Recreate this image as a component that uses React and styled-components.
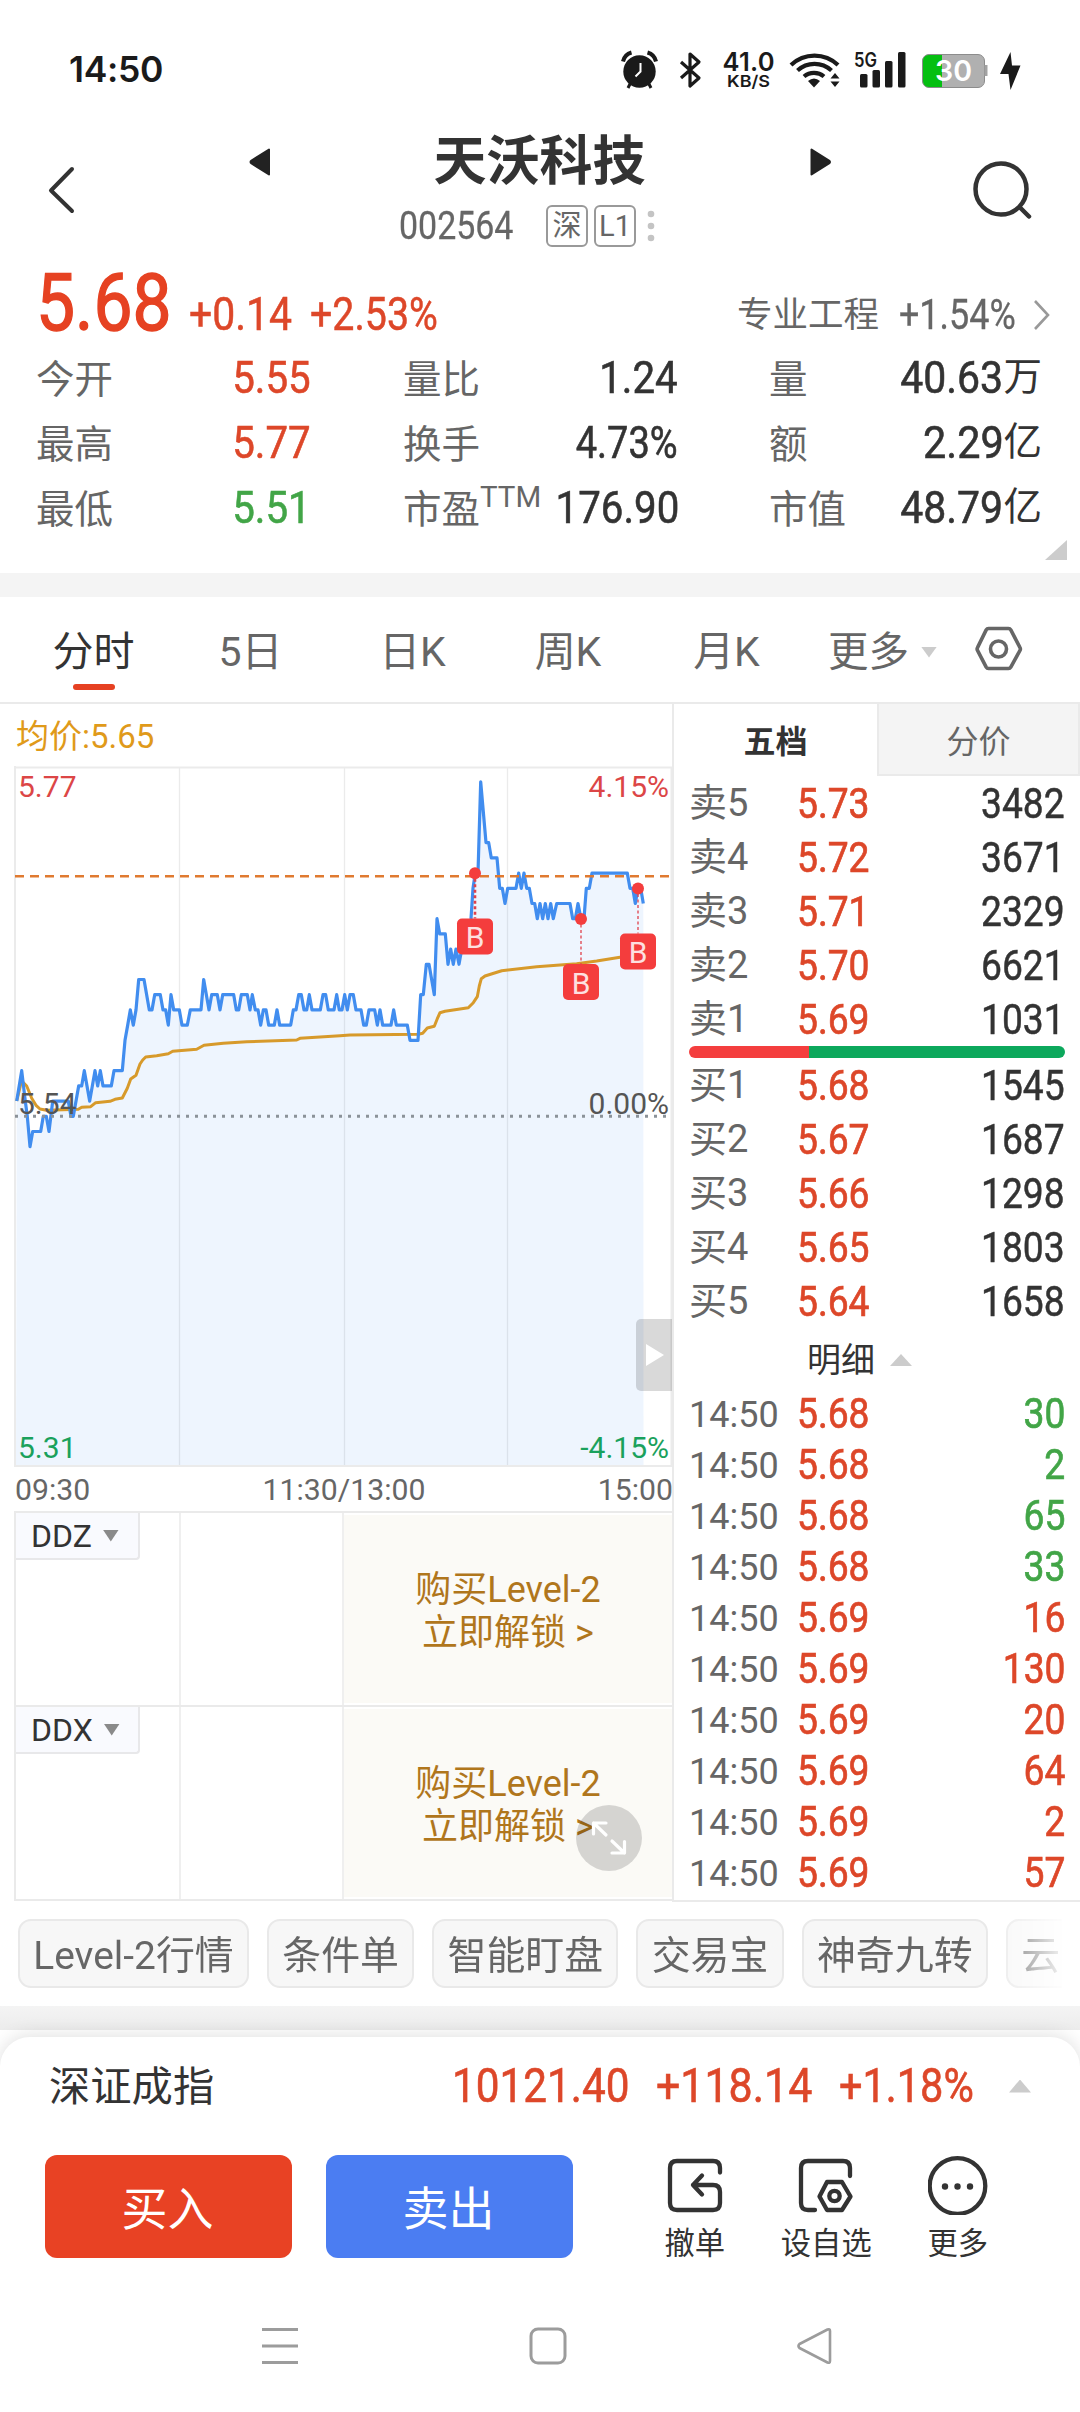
import React from "react";
import styled, { createGlobalStyle } from "styled-components";

const RED = "#dd4729";
const GREEN = "#42a547";
const INK = "#333333";
const GREY = "#666666";
const LINE = "#eaeaea";

const GlobalStyle = createGlobalStyle`
  * { box-sizing: border-box; }
  html, body { margin: 0; background: #fff; }
  body {
    font-family: Roboto, "Noto Sans CJK SC", sans-serif;
    color: ${INK};
    -webkit-font-smoothing: antialiased;
  }
  svg { display: block; flex: none; }
`;

const Page = styled.div`
  width: 1080px;
  height: 2412px;
  overflow: hidden;
  display: flex;
  flex-direction: column;
  background: #fff;
`;

/* Condensed figures used for every price and amount */
const Num = styled.span`
  display: inline-block;
  white-space: nowrap;
  font-size: ${(p) => p.$size || 44}px;
  line-height: 1;
  font-weight: 400;
  -webkit-text-stroke: ${(p) => p.$stroke || 0}px currentColor;
  color: ${(p) => p.$color || INK};
  transform: scaleX(${(p) => p.$squeeze || 0.88});
  transform-origin: ${(p) => (p.$right ? "right" : "left")} center;
`;

/* ---------- status bar ---------- */
const StatusBar = styled.div`
  height: 110px;
  padding: 31px 40px 0 69px;
  display: flex;
  align-items: flex-start;
  justify-content: space-between;
`;
const Clock = styled.div`
  font: 600 35.500px/78px Inter, sans-serif;
  letter-spacing: -0.3px;
  color: #1a1a1a;
`;
const StatusGlyphs = styled.svg`
  margin-top: 9px;
  font-family: Inter, sans-serif;
  font-weight: 600;
  fill: #1a1a1a;
`;

function StatusIcons() {
  return (
    <StatusGlyphs width="430" height="60" viewBox="0 0 430 60">
      <g>
        <circle cx="29.5" cy="31.5" r="16.2" />
        <path d="M13 21.5a12 12 0 0 1 8.5-9" stroke="#1a1a1a" strokeWidth="4" fill="none" />
        <path d="M46 21.5a12 12 0 0 0-8.5-9" stroke="#1a1a1a" strokeWidth="4" fill="none" />
        <path d="M20.5 43l-2.500 5M38.500 43l2.500 5" stroke="#1a1a1a" strokeWidth="3" />
        <path d="M30.500 23v8.500l-5 5" stroke="#fff" strokeWidth="2" fill="none" />
      </g>
      <path d="M71 22l18 16-9 8V14l9 8-18 16" fill="none" stroke="#1a1a1a" strokeWidth="3.200" strokeLinejoin="round" />
      <text x="112.500" y="30.500" fontSize="25.500" textLength="52">41.0</text>
      <text x="117" y="47" fontSize="16.500" textLength="43" lengthAdjust="spacingAndGlyphs">KB/S</text>
      <text x="244" y="26.500" fontSize="19.500" textLength="23" lengthAdjust="spacingAndGlyphs">5G</text>
      <g fill="none" stroke="#1a1a1a" strokeWidth="4.200">
        <path d="M181 25a34 34 0 0 1 47 0" />
        <path d="M187.500 30.500a25 25 0 0 1 34 0" />
        <path d="M194 36.500a15.500 15.500 0 0 1 20 0" />
      </g>
      <path d="M204 47.500l-6-6.500q6-5 12 0z" />
      <path d="M220.500 38.500l4.500-5.500 4.500 5.500zM220.500 41.500l4.500 5.500 4.500-5.500z" />
      <rect x="250" y="34" width="7.500" height="13.500" rx="1.500" />
      <rect x="262.500" y="30" width="7.500" height="17.500" rx="1.500" />
      <rect x="275" y="21" width="7.500" height="26.500" rx="1.500" />
      <rect x="288" y="12" width="7.500" height="35.500" rx="1.500" />
      <rect x="312.500" y="14.500" width="62" height="33" rx="6.500" fill="#b0b0b0" />
      <path d="M332 14.500h-13a6.500 6.500 0 0 0-6.500 6.500v20a6.500 6.500 0 0 0 6.500 6.500h13z" fill="#05bf11" />
      <rect x="312.500" y="14.500" width="62" height="33" rx="6.500" fill="none" stroke="#8c8c8c" />
      <path d="M374.500 25h3v11h-3z" fill="#a2a2a2" />
      <text x="325" y="41" fontSize="29" fill="#fff" textLength="37" lengthAdjust="spacingAndGlyphs">30</text>
      <path d="M400.500 12l-10.500 22h8.500l2 16 10-24.500h-8.500z" />
    </StatusGlyphs>
  );
}

/* ---------- header ---------- */
const Header = styled.header`
  height: 150px;
  display: grid;
  grid-template-columns: 248px 1fr 248px;
`;
const HeaderSide = styled.div`
  display: flex;
  justify-content: ${(p) => (p.$end ? "flex-end" : "flex-start")};
  padding: ${(p) => (p.$end ? "50px 48px 0 0" : "55px 0 0 46px")};
`;
const HeaderCenter = styled.div`
  display: flex;
  flex-direction: column;
`;
const TitleRow = styled.div`
  height: 86px;
  padding-top: 18px;
  display: flex;
  align-items: center;
  justify-content: space-between;
`;
const Title = styled.h1`
  margin: 0 1px 10px 0;
  font: 700 53px/64px "Noto Sans CJK SC", sans-serif;
`;
const CodeRow = styled.div`
  display: flex;
  align-items: center;
  height: 60px;
  padding-left: 151px;
`;
const CodeSlot = styled.div`
  width: 147px;
  display: flex;
`;
const Badge = styled.span`
  width: 42px;
  height: 42px;
  margin-right: 6px;
  border: 2px solid #999;
  border-radius: 6px;
  display: flex;
  align-items: center;
  justify-content: center;
  font-size: 29px;
  line-height: 1;
  color: ${GREY};
`;

/* ---------- quote ---------- */
const Quote = styled.section`
  height: 313px;
  padding: 4px 13px 13px 36px;
  display: flex;
  flex-direction: column;
`;
const PriceRow = styled.div`
  height: 87px;
  display: flex;
  align-items: flex-start;
`;
const PriceSlot = styled.div`
  width: ${(p) => p.$w}px;
  padding-top: ${(p) => p.$pt || 0}px;
  line-height: ${(p) => (p.$pt ? "normal" : "40px")};
`;
const Sector = styled.div`
  flex: 1;
  display: flex;
  align-items: center;
  padding-top: 30px;
  font-size: 35.500px;
  line-height: 42px;
  color: ${GREY};
`;
const SectorName = styled.span`
  width: 162px;
`;
const SectorChange = styled.span`
  width: 134px;
  display: flex;
`;
const Stats = styled.div`
  display: grid;
  grid-template-columns: 367px 366px 1fr;
  grid-auto-rows: 65px;
  padding-right: 25px;
`;
const Stat = styled.div`
  display: flex;
  align-items: center;
  justify-content: space-between;
  padding-right: ${(p) => p.$pr || 0}px;
`;
const StatLabel = styled.span`
  font-size: 38.500px;
  line-height: 60px;
  padding-top: 4px;
  color: ${GREY};
  white-space: nowrap;
  display: flex;
`;
const Sup = styled.span`
  font-size: 29.500px;
  line-height: 34px;
`;
const Amount = styled.span`
  display: flex;
  align-items: center;
  font-size: 38.500px;
  line-height: 1;
`;
const Corner = styled.div`
  align-self: flex-end;
  margin-top: auto;
  width: 22px;
  height: 22px;
  background: #ccc;
  clip-path: polygon(100% 0, 100% 100%, 0 100%);
`;

const Band = styled.div`
  flex: none;
  height: 24px;
  background: ${(p) => (p.$shade ? "linear-gradient(#f4f4f4, #ececec)" : "#f4f4f4")};
`;

/* ---------- period tabs ---------- */
const Tabs = styled.nav`
  height: 107px;
  border-bottom: 2px solid ${LINE};
  display: flex;
  align-items: flex-start;
`;
const Tab = styled.div`
  width: ${(p) => p.$w}px;
  height: 93px;
  padding-top: 25px;
  display: flex;
  flex-direction: column;
  align-items: center;
  justify-content: space-between;
  font-size: 41px;
  line-height: 60px;
  color: ${(p) => (p.$on ? INK : GREY)};
  &::after {
    content: "";
    width: 42px;
    height: 6px;
    border-radius: 3px;
    background: ${(p) => (p.$on ? "#e64122" : "transparent")};
  }
`;
const MoreTab = styled.div`
  width: 147px;
  padding-top: 25px;
  display: flex;
  align-items: center;
  gap: 12px;
  font-size: 40.500px;
  line-height: 60px;
  color: ${GREY};
`;
const Settings = styled.svg`
  margin-top: 28px;
`;
const Caret = styled.i`
  width: ${(p) => p.$w || 16}px;
  height: ${(p) => p.$h || 11}px;
  background: ${(p) => p.$color || "#ccc"};
  clip-path: ${(p) => (p.$up ? "polygon(50% 0, 100% 100%, 0 100%)" : "polygon(0 0, 100% 0, 50% 100%)")};
`;

/* ---------- main area ---------- */
const Main = styled.main`
  height: 1198px;
  display: grid;
  grid-template-columns: 674px 406px;
`;
const ChartColumn = styled.section`
  position: relative;
  border-right: 2px solid ${LINE};
  height: 1198px;
`;
const Average = styled.div`
  height: 62px;
  padding: 3px 0 0 16px;
  font-size: 33px;
  line-height: 60px;
  color: #e09a1a;
`;
const Axis = styled.div`
  height: 44px;
  padding-left: 15px;
  margin-right: -1px;
  display: flex;
  justify-content: space-between;
  font-size: 30.200px;
  line-height: 46px;
  color: ${GREY};
`;
const Indicator = styled.div`
  height: ${(p) => p.$h}px;
  margin-left: 14px;
  border-left: 2px solid ${LINE};
  border-top: 2px solid ${LINE};
  border-bottom: ${(p) => (p.$last ? `2px solid ${LINE}` : "0")};
  display: grid;
  grid-template-columns: 165px 163px 1fr;
`;
const Cell = styled.div`
  border-right: 2px solid #efefef;
`;
const Tag = styled.div`
  width: 124px;
  height: 47px;
  border: 2px solid #e8e8ea;
  border-left: 0;
  border-top: 0;
  border-radius: 0 0 4px 0;
  background: #f9fafe;
  display: flex;
  align-items: center;
  gap: 11px;
  padding-left: 15px;
  font-size: 32px;
  line-height: 44px;
`;
const Promo = styled.div`
  margin: 2px 0;
  background: #fbfaf6;
  display: flex;
  flex-direction: column;
  align-items: center;
  justify-content: center;
  font-size: 36px;
  line-height: 42.500px;
  color: #b0761c;
  padding-top: 5px;
`;
const Handle = styled.div`
  position: absolute;
  right: 0;
  top: 615px;
  width: 36px;
  height: 72px;
  border-radius: 5px 0 0 5px;
  background: rgba(0, 0, 0, 0.15);
  display: flex;
  align-items: center;
  padding-left: 10px;
`;
const Expand = styled.div`
  position: absolute;
  left: 576px;
  top: 1101px;
  width: 66px;
  height: 66px;
  border-radius: 50%;
  background: rgba(0, 0, 0, 0.15);
  display: flex;
  align-items: center;
  justify-content: center;
`;

/* ---------- order book ---------- */
const Book = styled.section`
  display: flex;
  flex-direction: column;
  height: 1198px;
  border-bottom: 2px solid ${LINE};
`;
const BookTabs = styled.div`
  height: 72px;
  display: grid;
  grid-template-columns: 203px 203px;
  font-size: 32px;
  line-height: 76px;
  text-align: center;
`;
const BookTab = styled.div`
  height: 72px;
  font-weight: ${(p) => (p.$on ? 700 : 400)};
  color: ${(p) => (p.$on ? INK : GREY)};
  background: ${(p) => (p.$on ? "#fff" : "#f4f4f4")};
  border: ${(p) => (p.$on ? "0" : `2px solid ${LINE}`)};
  border-top-width: 0;
`;
const BookRow = styled.div`
  height: ${(p) => p.$h}px;
  padding: 0 15px 0 15px;
  display: grid;
  grid-template-columns: 107.500px 1fr auto;
  align-items: center;
`;
const Level = styled.span`
  font-size: 38px;
  line-height: 50px;
  color: ${GREY};
`;
const Time = styled.span`
  font-size: 36px;
  line-height: 48px;
  padding-top: 3px;
  color: ${GREY};
`;
const Ratio = styled.div`
  height: 12px;
  margin: 0 15px;
  border-radius: 6px;
  background: linear-gradient(to right, #f43e3e 32%, #0ca85c 32%);
`;
const DetailHead = styled.div`
  height: 60px;
  padding: 4px 0 0 133px;
  display: flex;
  align-items: center;
  gap: 15px;
  font-size: 34px;
  line-height: 50px;
`;

/* ---------- shortcuts ---------- */
const Chips = styled.div`
  height: 104px;
  flex: none;
  padding: 17px 0 0 18px;
  margin-right: 18px;
  display: flex;
  gap: 18px;
  overflow: hidden;
  mask-image: linear-gradient(to right, #000 985px, transparent 1070px);
`;
const Chip = styled.div`
  height: 69px;
  flex: none;
  padding: 0 13.300px;
  border: 2px solid #e9e9e9;
  border-radius: 13px;
  background: #f7f7f7;
  font-size: 38.900px;
  line-height: 70px;
  color: ${GREY};
  white-space: nowrap;
`;

/* ---------- bottom card ---------- */
const Dock = styled.footer`
  flex: 1;
  margin-top: 7px;
  border-radius: 30px 30px 0 0;
  background: #fff;
  box-shadow: 0 -2px 18px rgba(0, 0, 0, 0.12);
`;
const IndexRow = styled.div`
  height: 98px;
  padding: 0 48px 0 49px;
  display: flex;
  align-items: center;
`;
const IndexName = styled.span`
  width: 403px;
  font-size: 41.300px;
  line-height: 60px;
  padding-top: 2px;
`;
const IndexSlot = styled.span`
  width: ${(p) => p.$w}px;
  display: flex;
`;
const Actions = styled.div`
  height: 143px;
  padding: 20px 0 0 45px;
  display: flex;
`;
const TradeButton = styled.button`
  width: 247px;
  height: 103px;
  margin-right: 34px;
  border: 0;
  border-radius: 12px;
  background: ${(p) => p.$bg};
  color: #fff;
  font: 400 46px/96px "Noto Sans CJK SC", sans-serif;
  padding: 0 2px 3px 0;
`;
const Tool = styled.div`
  width: 131.500px;
  display: flex;
  flex-direction: column;
  align-items: center;
  font-size: 30.300px;
  line-height: 40px;
  & svg { margin-bottom: 9px; }
`;
const ToolGroup = styled.div`
  display: flex;
  margin-left: 22px;
`;
const SystemNav = styled.div`
  height: 70px;
  margin-top: 33px;
  padding: 0 247px 0 262px;
  display: flex;
  align-items: center;
  justify-content: space-between;
`;

/* ---------- chart data ---------- */
/* [x in thirds of a pixel, price ticks above the previous close] */
const TRACE = [
  [50,1],[65,3],[76,1],[82,0],[90,-2],[98,-1],[122,-1],[130,0],[139,0],[147,-1],[158,1],[205,1],[213,0],[220,0],[236,2],[245,2],[253,3],[269,1],[285,3],[293,2],[301,3],[309,2],[334,2],[342,3],[367,3],[375,5],[383,6],[391,7],[400,6],[408,7],[416,9],[432,9],[448,7],[456,7],[464,8],[481,8],[489,7],[497,7],[505,6],[513,8],[521,7],[538,7],[546,6],[562,6],[571,7],[603,7],[611,9],[627,7],[635,8],[652,8],[660,7],[668,8],[701,8],[709,7],[716,7],[724,8],[742,8],[750,7],[757,8],[766,7],[774,7],[782,6],[790,7],[798,7],[806,6],[823,6],[831,7],[839,6],[872,6],[880,7],[888,7],[896,8],[904,8],[912,7],[920,7],[928,8],[936,7],[961,7],[969,8],[977,8],[985,7],
  [1002,7],[1010,8],[1018,7],[1026,7],[1034,8],[1042,7],[1050,8],[1060,8],[1068,7],[1083,7],[1091,6],[1099,6],[1107,7],[1124,7],[1132,6],[1140,7],[1148,6],[1173,6],[1181,7],[1189,6],[1222,6],[1230,5],[1254,5],[1262,8],[1270,8],[1279,10],[1287,10],[1303,8],[1311,13],[1319,12],[1336,12],[1344,10],[1352,11],[1360,10],[1368,11],[1377,10],[1385,11],[1405,11],[1413,13],[1419,15],[1426,16],[1434,16],[1442,22],[1458,18],[1466,18],[1474,17],[1491,17],[1499,15],[1507,15],[1515,14],[1523,15],[1548,15],[1556,16],[1564,15],[1572,16],[1580,15],[1588,15],[1596,14],[1604,14],[1612,13],[1620,14],[1628,13],[1636,14],[1644,13],[1652,14],[1660,13],[1670,14],[1710,14],[1718,13],[1726,13],[1734,14],[1743,13],[1752,13],[1759,15],[1768,15],[1776,16],[1882,16],[1890,15],[1898,15],[1906,14],[1914,15],[1922,15],[1930,14],
];
const AVERAGE = [
  [50,1053],[62,1003],[70,998],[80,1008],[95,1045],[108,1066],[120,1077],[140,1081],[235,1078],[245,1072],[272,1070],[287,1058],[330,1054],[345,1048],[367,1044],[382,1015],[392,987],[408,976],[420,942],[428,930],[437,921],[470,917],[505,911],[518,904],[590,898],[612,886],[670,880],[740,875],[890,870],[900,865],[960,861],[1020,857],
  [1050,855],[1255,853],[1268,850],[1282,834],[1303,829],[1312,806],[1320,788],[1335,784],[1405,773],[1420,758],[1432,740],[1438,708],[1444,686],[1455,678],[1505,662],[1610,650],[1730,641],[1790,633],[1860,622],[1914,616],
];
const MARKS = [
  { x: 475, dot: 873.3, top: 918.5, bold: true },
  { x: 581, dot: 919, top: 964 },
  { x: 638, dot: 888.5, top: 933.5 },
];

function PriceChart() {
  const pts = TRACE.map(([x, n]) => `${(x / 3).toFixed(1)},${(1116.3 - n * 15.2).toFixed(1)}`).join(" ");
  const avg = AVERAGE.map(([x, y]) => `${(x / 3).toFixed(1)},${(750 + y / 3).toFixed(1)}`).join(" ");
  return (
    <svg width="672" height="701" viewBox="0 766 672 701" fontFamily="Roboto, sans-serif" fontSize="30">
      <g stroke="#ebebeb">
        <path d="M179.500 767v699M344.500 767v699M507.500 767v699" strokeWidth="1.300" />
        <path d="M15 766v701M671.500 767v699M14 767.500h658M14 1466h658" strokeWidth="2" />
      </g>
      <polygon points={`16,1465 ${pts} 643.500,1465`} fill="#4090f0" fillOpacity="0.09" />
      <polyline points={avg} fill="none" stroke="#d79a2b" strokeWidth="3" strokeLinejoin="round" />
      <polyline points={pts} fill="none" stroke="#418def" strokeWidth="3.200" strokeLinejoin="round" />
      <path d="M15 876.300h655" stroke="#e07a30" strokeWidth="2.600" strokeDasharray="9 6" />
      <path d="M15 1116.300h655" stroke="#8b9299" strokeWidth="3" strokeDasharray="3 6" />
      {MARKS.map((m) => (
        <g key={m.x}>
          <path d={`M${m.x} ${m.dot}V${m.top}`} stroke="#e0404a" strokeWidth={m.bold ? 2.6 : 1.3} strokeDasharray="3 2.5" />
          <circle cx={m.x} cy={m.dot} r="6" fill="#f43d3d" />
          <rect x={m.x - 18} y={m.top} width="36" height="36" rx="5" fill="#f43d3d" />
          <text x={m.x} y={m.top + 29.5} fontSize="30" textAnchor="middle" fill="#fde0e0">B</text>
        </g>
      ))}
      <text x="18" y="797" fill="#dc4646">5.77</text>
      <text x="669" y="797" fill="#dc4646" textAnchor="end">4.15%</text>
      <text x="18" y="1114" fill="#555">5.54</text>
      <text x="669" y="1114" fill="#555" textAnchor="end">0.00%</text>
      <text x="18" y="1458" fill="#1aa15c">5.31</text>
      <text x="669" y="1458" fill="#1aa15c" textAnchor="end">-4.15%</text>
    </svg>
  );
}

const STATS = [
  { label: "今开", value: "5.55", color: RED, col: 0 },
  { label: "量比", value: "1.24", col: 1 },
  { label: "量", value: "40.63", unit: "万", col: 2, squeeze: 0.91 },
  { label: "最高", value: "5.77", color: RED, col: 0 },
  { label: "换手", value: "4.73%", col: 1, squeeze: 0.845 },
  { label: "额", value: "2.29", unit: "亿", col: 2, squeeze: 0.92 },
  { label: "最低", value: "5.51", color: GREEN, col: 0 },
  { label: "市盈", sup: "TTM", value: "176.90", col: 1 },
  { label: "市值", value: "48.79", unit: "亿", col: 2, squeeze: 0.91 },
];
const COLUMN_END = [92, 91, 0];

const SELLS = [["卖5", "5.73", "3482"], ["卖4", "5.72", "3671"], ["卖3", "5.71", "2329"], ["卖2", "5.70", "6621"], ["卖1", "5.69", "1031"]];
const BUYS = [["买1", "5.68", "1545"], ["买2", "5.67", "1687"], ["买3", "5.66", "1298"], ["买4", "5.65", "1803"], ["买5", "5.64", "1658"]];
const TICKS = [
  ["5.68", "30", GREEN], ["5.68", "2", GREEN], ["5.68", "65", GREEN], ["5.68", "33", GREEN], ["5.69", "16", RED],
  ["5.69", "130", RED], ["5.69", "20", RED], ["5.69", "64", RED], ["5.69", "2", RED], ["5.69", "57", RED],
];
const CHIPS = ["Level-2行情", "条件单", "智能盯盘", "交易宝", "神奇九转", "云"];

function OrderRow({ row }) {
  return (
    <BookRow $h={54}>
      <Level>{row[0]}</Level>
      <Num $size={43} $stroke={0.7} $squeeze={0.865} $color={RED}>{row[1]}</Num>
      <Num $size={43} $stroke={0.5} $squeeze={0.865} $right>{row[2]}</Num>
    </BookRow>
  );
}

function IndicatorPanel({ name, height, last }) {
  return (
    <Indicator $h={height} $last={last}>
      <Cell><Tag>{name}<Caret $color="#8a8a8a" $h={12} /></Tag></Cell>
      <Cell />
      <Promo><span>购买Level-2</span><span>立即解锁 &gt;</span></Promo>
    </Indicator>
  );
}

export default function App() {
  return (
    <Page>
      <GlobalStyle />
      <StatusBar>
        <Clock>14:50</Clock>
        <StatusIcons />
      </StatusBar>

      <Header>
        <HeaderSide>
          <svg width="30" height="50" viewBox="0 0 30 50" fill="none" stroke="#333" strokeWidth="4" strokeLinecap="round" strokeLinejoin="round">
            <path d="M26 4L5 25.500 26 46" />
          </svg>
        </HeaderSide>
        <HeaderCenter>
          <TitleRow>
            <svg width="22" height="28" viewBox="0 0 22 28"><path d="M21 1.500v25L3.500 15.500q-2-1.500 0-3z" fill="#222" stroke="#222" strokeWidth="2" strokeLinejoin="round" /></svg>
            <Title>天沃科技</Title>
            <svg width="22" height="28" viewBox="0 0 22 28"><path d="M1.500 1.500v25l17.500-11q2-1.500 0-3z" fill="#222" stroke="#222" strokeWidth="2" strokeLinejoin="round" /></svg>
          </TitleRow>
          <CodeRow>
            <CodeSlot><Num $size={39} $stroke={0.3} $squeeze={0.87} $color={GREY}>002564</Num></CodeSlot>
            <Badge>深</Badge>
            <Badge>L1</Badge>
            <svg width="20" height="32" viewBox="0 0 20 32" fill="#c4c4c4"><circle cx="9" cy="4" r="3.300" /><circle cx="9" cy="16" r="3.300" /><circle cx="9" cy="28" r="3.300" /></svg>
          </CodeRow>
        </HeaderCenter>
        <HeaderSide $end>
          <svg width="60" height="62" viewBox="0 0 60 62" fill="none" stroke="#333" strokeWidth="4.500" strokeLinecap="round">
            <circle cx="29" cy="29" r="25.500" />
            <path d="M48 47.500l9 9" />
          </svg>
        </HeaderSide>
      </Header>

      <Quote>
        <PriceRow>
          <PriceSlot $w={153}><Num $size={79} $stroke={1.4} $squeeze={0.88} $color="#e64222">5.68</Num></PriceSlot>
          <PriceSlot $w={121} $pt={28}><Num $size={45.5} $stroke={0.5} $squeeze={0.9} $color={RED}>+0.14</Num></PriceSlot>
          <PriceSlot $w={427} $pt={28}><Num $size={45.5} $stroke={0.5} $squeeze={0.865} $color={RED}>+2.53%</Num></PriceSlot>
          <Sector>
            <SectorName>专业工程</SectorName>
            <SectorChange><Num $size={42} $stroke={0.3} $squeeze={0.855} $color={GREY}>+1.54%</Num></SectorChange>
            <svg width="20" height="32" viewBox="0 0 20 32" fill="none" stroke="#999" strokeWidth="2.600"><path d="M2 2l13 14L2 30" /></svg>
          </Sector>
        </PriceRow>
        <Stats>
          {STATS.map((s) => (
            <Stat key={s.label} $pr={COLUMN_END[s.col]}>
              <StatLabel>{s.label}{s.sup && <Sup>{s.sup}</Sup>}</StatLabel>
              <Amount>
                <Num $size={45} $stroke={0.6} $squeeze={s.squeeze || 0.895} $color={s.color} $right>{s.value}</Num>
                {s.unit}
              </Amount>
            </Stat>
          ))}
        </Stats>
        <Corner />
      </Quote>
      <Band />

      <Tabs>
        <Tab $w={187} $on>分时</Tab>
        <Tab $w={127}>5日</Tab>
        <Tab $w={197}>日K</Tab>
        <Tab $w={114}>周K</Tab>
        <Tab $w={203}>月K</Tab>
        <MoreTab>更多<Caret /></MoreTab>
        <Settings width="48" height="48" viewBox="0 0 48 48" fill="none" stroke="#666" strokeWidth="3.600" strokeLinejoin="round">
          <path d="M13.500 3.500h20q1.500 0 2.300 1.400L45 22.600q.8 1.400 0 2.800l-9.200 16.700q-.8 1.400-2.300 1.400h-20q-1.500 0-2.300-1.400L2.500 25.400q-.8-1.400 0-2.800l8.700-17.700q.8-1.400 2.300-1.400z" />
          <circle cx="23.500" cy="24" r="8" />
        </Settings>
      </Tabs>

      <Main>
        <ChartColumn>
          <Average>均价:5.65</Average>
          <PriceChart />
          <Axis><span>09:30</span><span>11:30/13:00</span><span>15:00</span></Axis>
          <IndicatorPanel name="DDZ" height={194} />
          <IndicatorPanel name="DDX" height={196} last />
          <Handle>
            <svg width="18" height="22" viewBox="0 0 18 22" fill="#fff"><path d="M0 0l18 11L0 22z" /></svg>
          </Handle>
          <Expand>
            <svg width="38" height="38" viewBox="0 0 38 38" fill="none" stroke="#fff" strokeWidth="3.200" strokeLinecap="round" strokeLinejoin="round">
              <path d="M16 16L3.500 4M3.500 15V4H16M22 22l12.500 12M34.500 22.500V34H22" />
            </svg>
          </Expand>
        </ChartColumn>

        <Book>
          <BookTabs><BookTab $on>五档</BookTab><BookTab>分价</BookTab></BookTabs>
          {SELLS.map((r) => <OrderRow key={r[0]} row={r} />)}
          <Ratio />
          {BUYS.map((r) => <OrderRow key={r[0]} row={r} />)}
          <DetailHead>明细<Caret $up $w={22} $h={12} /></DetailHead>
          {TICKS.map(([price, volume, color], i) => (
            <BookRow key={i} $h={51}>
              <Time>14:50</Time>
              <Num $size={43} $stroke={0.7} $squeeze={0.865} $color={RED}>{price}</Num>
              <Num $size={43} $stroke={0.7} $squeeze={0.865} $color={color} $right>{volume}</Num>
            </BookRow>
          ))}
        </Book>
      </Main>

      <Chips>{CHIPS.map((c) => <Chip key={c}>{c}</Chip>)}</Chips>
      <Band $shade />

      <Dock>
        <IndexRow>
          <IndexName>深证成指</IndexName>
          <IndexSlot $w={204}><Num $size={48.5} $stroke={0.6} $squeeze={0.872} $color={RED}>10121.40</Num></IndexSlot>
          <IndexSlot $w={183}><Num $size={48.5} $stroke={0.6} $squeeze={0.885} $color={RED}>+118.14</Num></IndexSlot>
          <IndexSlot $w={170}><Num $size={48.5} $stroke={0.6} $squeeze={0.855} $color={RED}>+1.18%</Num></IndexSlot>
          <Caret $up $w={22} $h={13} />
        </IndexRow>
        <Actions>
          <TradeButton $bg="#e84224">买入</TradeButton>
          <TradeButton $bg="#4b7df2">卖出</TradeButton>
          <ToolGroup>
            <Tool>
              <svg width="60" height="60" viewBox="0 0 60 60" fill="none" stroke="#333" strokeWidth="4.300" strokeLinecap="round" strokeLinejoin="round">
                <path d="M55 17.500V13q0-7-7-7H12q-7 0-7 7v35q0 7 7 7h36q7 0 7-7V37q0-7-7-7H28M37 20.500L28 30l9 9.500" />
              </svg>
              撤单
            </Tool>
            <Tool>
              <svg width="60" height="60" viewBox="0 0 60 60" fill="none" stroke="#333" strokeWidth="4.300" strokeLinecap="round" strokeLinejoin="round">
                <path d="M54 21V13q0-7-7-7H12q-7 0-7 7v35q0 7 7 7h7M31 27h15l8.500 14.500L46 55h-15L23.500 41.500z" />
                <circle cx="38.500" cy="41" r="5.200" />
              </svg>
              设自选
            </Tool>
            <Tool>
              <svg width="60" height="60" viewBox="0 0 60 60" fill="none" stroke="#333" strokeWidth="4.300">
                <circle cx="29.500" cy="31" r="27.800" />
                <g fill="#333" stroke="none"><circle cx="17" cy="31.500" r="3.200" /><circle cx="29.500" cy="31.500" r="3.200" /><circle cx="42" cy="31.500" r="3.200" /></g>
              </svg>
              更多
            </Tool>
          </ToolGroup>
        </Actions>
        <SystemNav>
          <svg width="37" height="38" viewBox="0 0 37 38" stroke="#9c9c9c" strokeWidth="3"><path d="M0 2.500h36M0 19h36M0 35.500h36" /></svg>
          <svg width="38" height="38" viewBox="0 0 38 38" fill="none" stroke="#9c9c9c" strokeWidth="3"><rect x="2" y="2" width="34" height="34" rx="7" /></svg>
          <svg width="36" height="38" viewBox="0 0 36 38" fill="none" stroke="#9c9c9c" strokeWidth="2.600" strokeLinejoin="round"><path d="M30.500 2.500Q33 1.500 33 4v30q0 2.500-2.500 1.500L2.500 21q-2-2 0-4z" /></svg>
        </SystemNav>
      </Dock>
    </Page>
  );
}
